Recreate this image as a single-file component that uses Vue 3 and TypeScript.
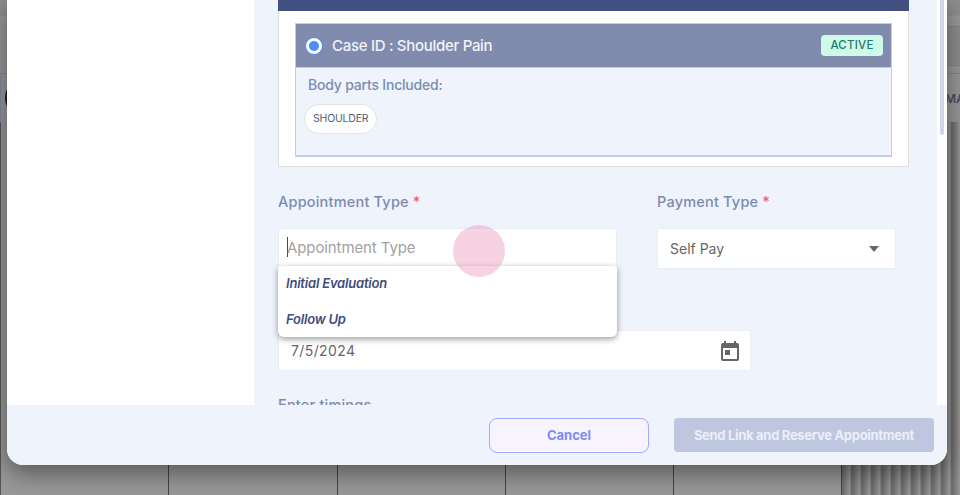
<script setup lang="ts">
import { ref } from "vue";

const caseTitle = ref("Case ID : Shoulder Pain");
const bodyParts = ref(["SHOULDER"]);
const appointmentTypes = ref(["Initial Evaluation", "Follow Up"]);
const gridLines = [168, 337, 505, 673, 841];
</script>

<template>
  <div class="page">
    <!-- page behind the dimmed overlay -->
    <div class="behind">
      <i class="top-rule"></i>
      <i class="left-edge"></i>
      <i class="stripes"></i>
      <i v-for="x in gridLines" :key="x" class="grid-line" :style="{ left: x + 'px' }"></i>
      <i class="avatar"></i>
      <i class="search"></i>
      <span class="peek">MA</span>
    </div>

    <div class="modal">
      <div class="modal-body">
        <aside class="side"></aside>

        <main class="main">
          <div class="card-bar"></div>
          <section class="card">
            <div class="case">
              <div class="case-head">
                <span class="radio"></span>
                <span class="case-title">{{ caseTitle }}</span>
                <span class="badge">ACTIVE</span>
              </div>
              <div class="case-body">
                <p class="parts-label">Body parts Included:</p>
                <span v-for="part in bodyParts" :key="part" class="chip">{{ part }}</span>
              </div>
            </div>
          </section>

          <div class="fields">
            <div class="field type-field">
              <label class="label">Appointment Type <b>*</b></label>
              <div class="input">
                <span class="caret-line"></span>
                <span class="placeholder">Appointment Type</span>
              </div>
              <ul class="menu">
                <li v-for="item in appointmentTypes" :key="item">{{ item }}</li>
              </ul>
              <span class="ripple"></span>
            </div>
            <div class="field pay-field">
              <label class="label">Payment Type <b>*</b></label>
              <div class="input select">
                <span>Self Pay</span>
                <i class="arrow"></i>
              </div>
            </div>
          </div>

          <div class="input date">
            <span>7/5/2024</span>
            <svg class="cal" width="24" height="24" viewBox="0 0 24 24" fill="#666">
              <path d="M19 4h-1V2h-2v2H8V2H6v2H5a2 2 0 0 0-2 2v14a2 2 0 0 0 2 2h14a2 2 0 0 0 2-2V6a2 2 0 0 0-2-2zm0 16H5V9h14v11zM7 11h5v5H7z" />
            </svg>
          </div>

          <label class="label timings">Enter timings</label>
        </main>

        <div class="gutter"><i class="thumb"></i></div>
      </div>

      <footer class="modal-foot">
        <button class="btn cancel" type="button">Cancel</button>
        <button class="btn send" type="button">Send Link and Reserve Appointment</button>
      </footer>
    </div>
  </div>
</template>

<style>
html,
body {
  margin: 0;
  background: #8c8c8c;
}
</style>

<style scoped>
.page {
  position: relative;
  width: 960px;
  height: 495px;
  overflow: hidden;
  background: #9a9a9a;
  font-family: Inter, "Open Sans", sans-serif;
}

.behind {
  position: absolute;
  inset: 0;
  background: linear-gradient(#8e8e90 0, #8e8e90 15px, #999 16px, #999 495px);
}

.top-rule {
  position: absolute;
  left: 0;
  right: 0;
  top: 73px;
  height: 1px;
  background: #858585;
}

.left-edge {
  position: absolute;
  left: 0;
  top: 74px;
  bottom: 0;
  width: 1px;
  background: linear-gradient(#8088a8 0, #8088a8 48px, #555 49px, #555 100%);
}

.stripes {
  position: absolute;
  left: 841px;
  right: 0;
  top: 122px;
  bottom: 0;
  background: repeating-linear-gradient(90deg, #6f6f6f 0, #6f6f6f 2px, #999 9px, #6f6f6f 10px);
}

.grid-line {
  position: absolute;
  top: 122px;
  bottom: 0;
  width: 1px;
  background: #454545;
}

.avatar {
  position: absolute;
  left: 5px;
  top: 87px;
  width: 10px;
  height: 22px;
  border-radius: 50%;
  background: #2a1a2e;
}

.search {
  position: absolute;
  left: 930px;
  top: 26px;
  width: 50px;
  height: 38px;
  border: 1px solid #858585;
  border-radius: 6px;
  background: #8f8f8f;
}

.peek {
  position: absolute;
  left: 945px;
  top: 91px;
  font-size: 12px;
  font-weight: 600;
  color: #4a5068;
}

.modal {
  position: relative;
  display: flex;
  flex-direction: column;
  width: 940px;
  height: 465px;
  margin-left: 7px;
  border-radius: 0 0 16px 16px;
  background: #eff3fb;
  box-shadow: 0 8px 26px rgba(0, 0, 0, 0.45);
  overflow: hidden;
}

.modal-body {
  display: flex;
  height: 405px;
}

.side {
  width: 247px;
  background: #fff;
}

.main {
  flex: 1;
  min-width: 0;
  padding: 0 28px 0 24px;
  overflow: hidden;
}

.gutter {
  position: relative;
  width: 10px;
  background: #fff;
}

.thumb {
  position: absolute;
  left: 3px;
  top: 0;
  width: 4px;
  height: 135px;
  border-radius: 0 0 2px 2px;
  background: #cfd6ea;
}

.card-bar {
  height: 11px;
  background: #415080;
}

.card {
  height: 156px;
  padding: 12px 16px 10px;
  box-sizing: border-box;
  background: #fff;
  border: 1px solid #dedede;
  border-top: 0;
}

.case {
  height: 134px;
  box-sizing: border-box;
  border: 1px solid #c3cbee;
  border-bottom-width: 2px;
  background: #eff3fb;
}

.case-head {
  display: flex;
  align-items: center;
  height: 44px;
  padding: 0 8px 0 10px;
  background: #808bae;
  border-bottom: 1px solid #c3cbee;
  box-sizing: border-box;
}

.radio {
  width: 10px;
  height: 10px;
  margin-top: 1px;
  border: 3px solid #fff;
  border-radius: 50%;
  background: #4a8cff;
  box-shadow: 0 0 0 1px #4a8cff;
}

.case-title {
  flex: 1;
  margin-left: 10px;
  font-size: 15px;
  font-weight: 500;
  letter-spacing: -0.3px;
  color: #f2f3f8;
}

.badge {
  width: 62px;
  height: 21px;
  border-radius: 4px;
  background: #d0fae8;
  color: #1f7a72;
  font-size: 11.5px;
  font-weight: 500;
  line-height: 21px;
  text-align: center;
  letter-spacing: 0.2px;
}

.case-body {
  padding: 8px 8px;
}

.parts-label {
  margin: 0 0 10px 4px;
  font-size: 14px;
  font-weight: 500;
  line-height: 18px;
  letter-spacing: -0.2px;
  color: #7b8db0;
}

.chip {
  display: inline-block;
  padding: 0 8px;
  width: 55px;
  height: 28px;
  border: 1px solid #e3e3e3;
  border-radius: 15px;
  background: #fff;
  color: #555e75;
  font-size: 10.5px;
  line-height: 28px;
  letter-spacing: -0.2px;
}

.fields {
  display: flex;
  gap: 40px;
  margin-top: 25px;
}

.field {
  position: relative;
}

.type-field {
  width: 339px;
}

.pay-field {
  width: 239px;
}

.label {
  display: block;
  margin-bottom: 16px;
  font-size: 14.5px;
  font-weight: 500;
  line-height: 20px;
  letter-spacing: 0.2px;
  color: #7b8bb0;
}

.label b {
  color: #f25c6a;
  font-weight: 500;
}

.input {
  display: flex;
  align-items: center;
  height: 41px;
  box-sizing: border-box;
  padding: 0 12px;
  background: #fff;
  border: 1px solid #e9edf5;
  color: #666;
  font-size: 14px;
}

.type-field .input {
  padding: 0 8px 3px;
}

.caret-line {
  width: 1px;
  height: 20px;
  background: #2c4a8c;
}

.placeholder {
  margin-left: -1px;
  font-size: 15px;
  letter-spacing: -0.1px;
  color: #a2a2a2;
}

.select {
  justify-content: space-between;
}

.arrow {
  margin-right: 4px;
  border: 5px solid transparent;
  border-top: 6px solid #666;
  border-bottom: 0;
}

.menu {
  position: absolute;
  left: 0;
  right: 0;
  top: 74px;
  z-index: 2;
  margin: 0;
  padding: 0;
  height: 71px;
  list-style: none;
  background: #fff;
  border-radius: 2px 2px 6px 6px;
  box-shadow: 0 2px 6px rgba(0, 0, 0, 0.4);
}

.menu li {
  padding-left: 8px;
  height: 36px;
  font-size: 13px;
  font-weight: 600;
  font-style: italic;
  line-height: 34px;
  letter-spacing: -0.2px;
  color: #3f4d7b;
}

.ripple {
  position: absolute;
  left: 175px;
  top: 33px;
  z-index: 3;
  width: 52px;
  height: 52px;
  border-radius: 50%;
  background: rgba(233, 130, 175, 0.36);
}

.date {
  justify-content: space-between;
  width: 473px;
  margin-top: 61px;
  letter-spacing: 0.4px;
}

.cal {
  margin-right: -4px;
}

.timings {
  margin-top: 24px;
}

.modal-foot {
  display: flex;
  justify-content: flex-end;
  align-items: center;
  gap: 25px;
  flex: 1;
  padding-right: 13px;
  background: #eff3fb;
}

.btn {
  height: 35px;
  font-family: inherit;
  font-size: 13px;
  font-weight: 700;
}

.cancel {
  width: 160px;
  border: 1.5px solid #a0aaff;
  border-radius: 8px;
  background: #f7f4ff;
  color: #7e8bf5;
}

.send {
  width: 260px;
  height: 34px;
  border: 0;
  border-radius: 4px;
  background: #bfc6df;
  color: #eceff8;
  letter-spacing: -0.3px;
}
</style>
